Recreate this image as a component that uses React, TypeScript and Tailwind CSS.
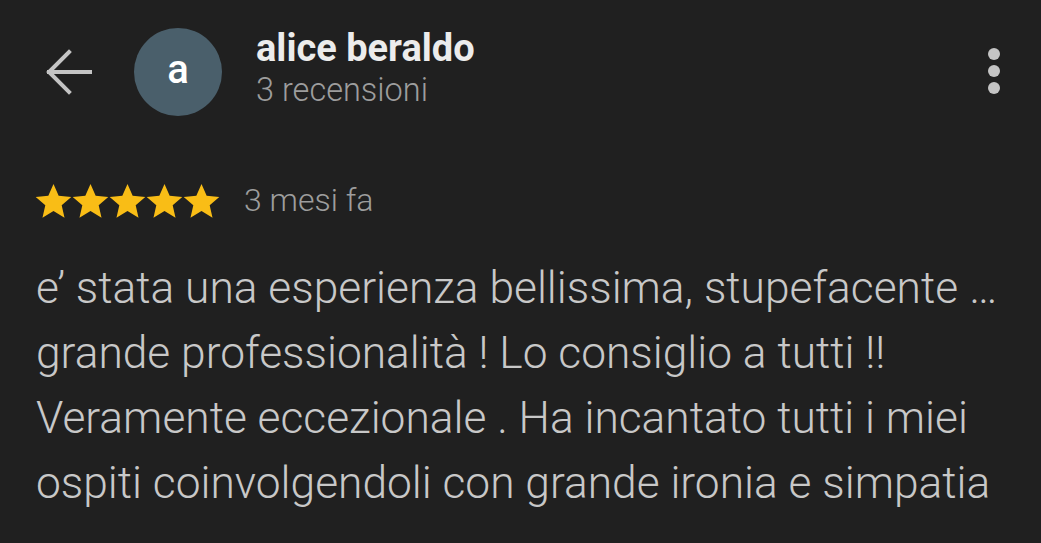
const Star = () => (
  <svg viewBox="1.6 1.6 20.8 20.8" className="h-[37px] w-[37px]" aria-hidden="true">
    <path
      fill="#f9bd16"
      d="M12 2.2l2.9 6.6 7.1.6-5.4 4.7 1.6 7-6.2-3.8-6.2 3.8 1.6-7L2 9.4l7.1-.6z"
    />
  </svg>
);

const BackArrow = () => (
  <svg viewBox="0 0 48 46" className="h-[46px] w-[48px]" aria-hidden="true">
    <path
      d="M47 23H5M25 3L5 23l20 20"
      fill="none"
      stroke="#c4c4c4"
      strokeWidth="4"
      strokeLinecap="square"
    />
  </svg>
);

const App = () => {
  return (
    <div
      className="h-[543px] w-[1041px] overflow-hidden bg-[#202020] text-[#c6c6c6]"
      style={{ fontFamily: 'Roboto, "Noto Sans", sans-serif' }}
    >
      <div className="flex items-center pt-[28px] pl-[44px] pr-[41px]">
        <BackArrow />
        <div className="ml-[42px] flex h-[88px] w-[88px] items-center justify-center rounded-full bg-[#4a5f6b] pb-[4px] text-[40px] font-medium text-white">
          a
        </div>
        <div className="ml-[34px] -mt-[8px] flex flex-1 flex-col leading-none">
          <span className="text-[38px] font-bold text-[#ececec]">alice beraldo</span>
          <span className="mt-[7px] text-[32.5px] font-light text-[#9d9d9d]">3 recensioni</span>
        </div>
        <div className="-mt-[2px] flex flex-col items-center gap-[5px]">
          <span className="h-[12px] w-[12px] rounded-full bg-[#c4c4c4]" />
          <span className="h-[12px] w-[12px] rounded-full bg-[#c4c4c4]" />
          <span className="h-[12px] w-[12px] rounded-full bg-[#c4c4c4]" />
        </div>
      </div>

      <div className="mt-[62px] flex items-center pl-[35px]">
        <div className="flex">
          <Star />
          <Star />
          <Star />
          <Star />
          <Star />
        </div>
        <span className="ml-[24px] -mt-[2px] text-[32px] font-light text-[#9d9d9d]">3 mesi fa</span>
      </div>

      <p className="mt-[32px] pl-[36px] pr-[10px] text-[44.3px] leading-[65px] font-light text-[#c8c8c8]">
        e’ stata una esperienza bellissima, stupefacente …
        <br />
        grande professionalità ! Lo consiglio a tutti !!
        <br />
        Veramente eccezionale . Ha incantato tutti i miei
        <br />
        ospiti coinvolgendoli con grande ironia e simpatia
      </p>
    </div>
  );
};

export default App;
